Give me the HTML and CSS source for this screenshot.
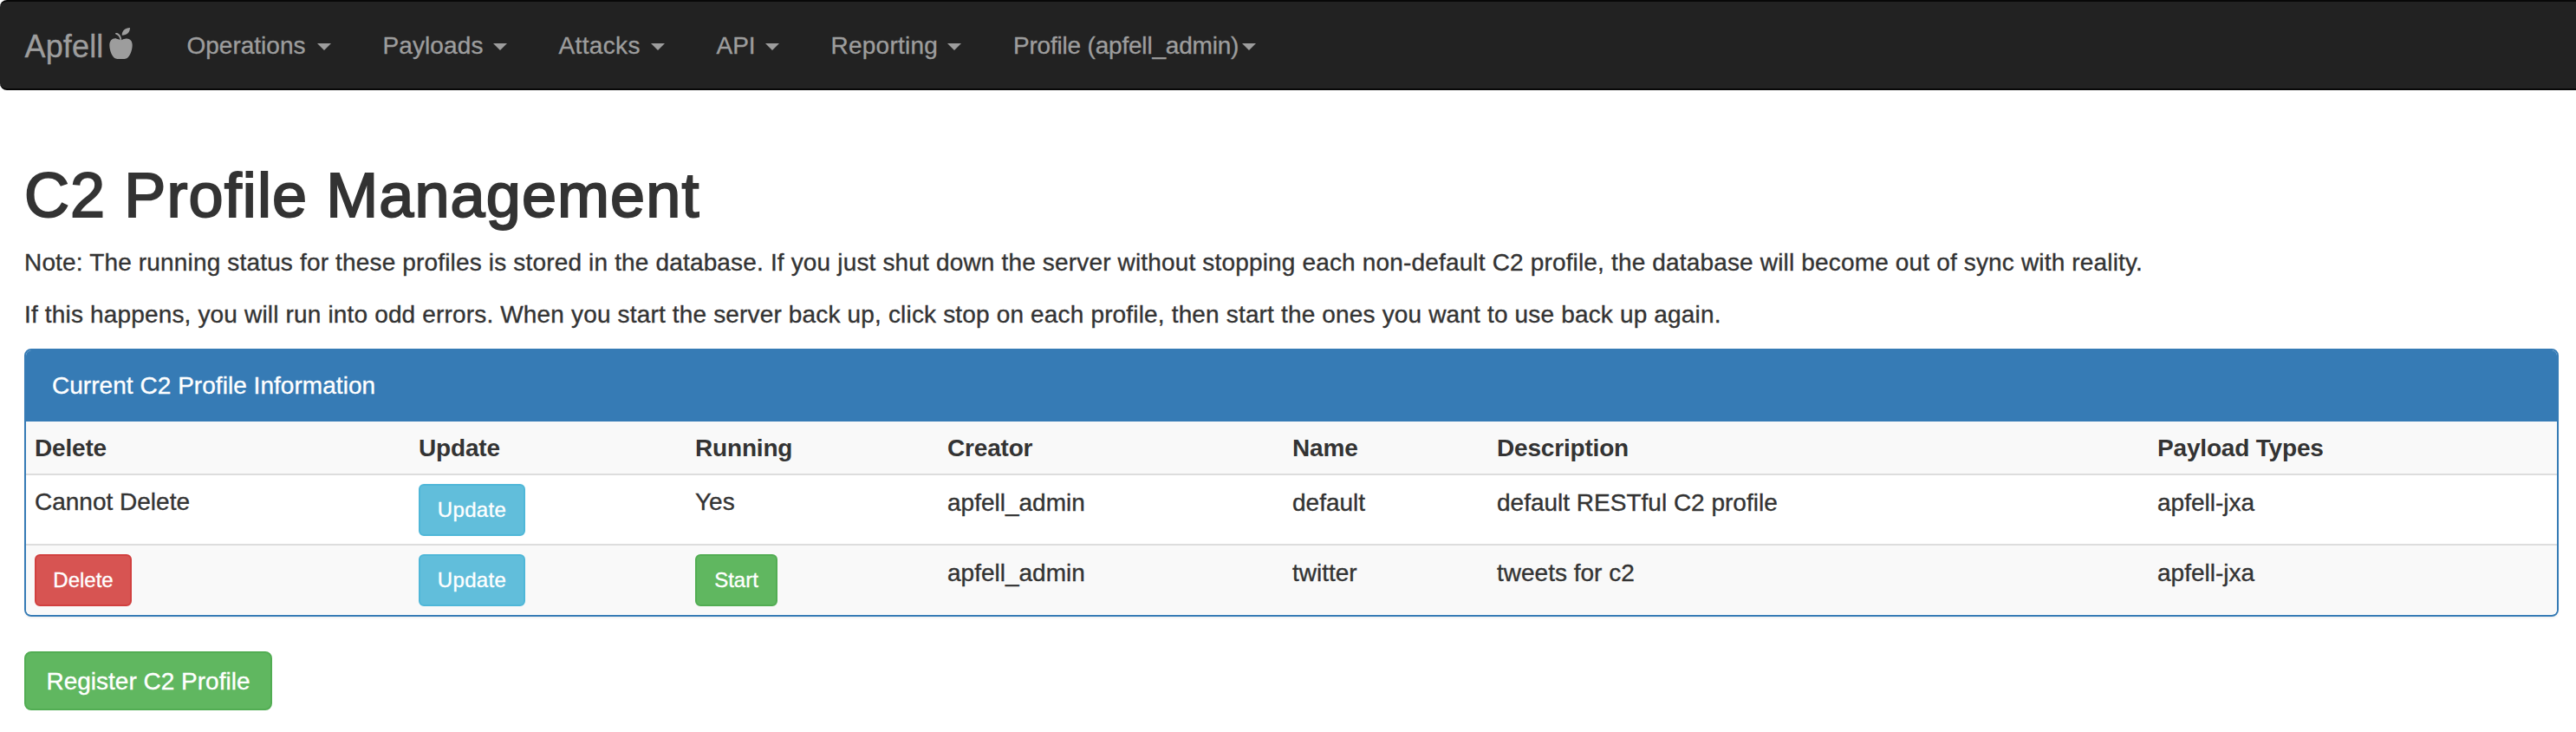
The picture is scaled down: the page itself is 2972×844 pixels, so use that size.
FILE: index.html
```
<!DOCTYPE html>
<html lang="en">
<head>
<meta charset="utf-8">
<title>C2 Profile Management</title>
<link rel="stylesheet" href="styles.css">
</head>
<body>
<nav class="navbar">
  <a class="brand"><span>Apfell</span><svg class="apple" viewBox="0 0 108 120" aria-hidden="true"><path d="M62 32C62 17 72 7 90 6C90 21 80 32 62 32Z"/><path d="M59 50C56 46 52 46 44 44C31 40 19 50 19 66C19 84 27 105 38 112C43 115 49 114 58 114C67 114 74 115 79 112C90 105 98 84 98 66C98 50 88 41 73 44C67 45 64 46 61 49C60 37 54 25 44 24L39 24L41 29C49 31 52 35 56 47Z"/></svg></a>
  <a class="link operations"><span>Operations</span><i class="caret"></i></a>
  <a class="link payloads"><span>Payloads</span><i class="caret"></i></a>
  <a class="link attacks"><span>Attacks</span><i class="caret"></i></a>
  <a class="link api"><span>API</span><i class="caret"></i></a>
  <a class="link reporting"><span>Reporting</span><i class="caret"></i></a>
  <a class="link profile"><span>Profile (apfell_admin)</span><i class="caret"></i></a>
</nav>
<main class="content">
  <h1 class="title">C2 Profile Management</h1>
  <p class="note">Note: The running status for these profiles is stored in the database. If you just shut down the server without stopping each non-default C2 profile, the database will become out of sync with reality.</p>
  <p class="note">If this happens, you will run into odd errors. When you start the server back up, click stop on each profile, then start the ones you want to use back up again.</p>
  <section class="panel">
    <div class="panel-heading">Current C2 Profile Information</div>
    <table class="table">
      <colgroup><col class="col-delete"><col class="col-update"><col class="col-running"><col class="col-creator"><col class="col-name"><col class="col-description"><col></colgroup>
      <thead>
        <tr><th>Delete</th><th>Update</th><th>Running</th><th>Creator</th><th>Name</th><th>Description</th><th>Payload Types</th></tr>
      </thead>
      <tbody>
        <tr><td class="status">Cannot Delete</td><td><button class="btn btn-info">Update</button></td><td class="status">Yes</td><td class="data">apfell_admin</td><td class="data">default</td><td class="data">default RESTful C2 profile</td><td class="data">apfell-jxa</td></tr>
        <tr><td><button class="btn btn-danger">Delete</button></td><td><button class="btn btn-info">Update</button></td><td><button class="btn btn-start">Start</button></td><td class="data">apfell_admin</td><td class="data">twitter</td><td class="data">tweets for c2</td><td class="data">apfell-jxa</td></tr>
      </tbody>
    </table>
  </section>
  <button class="btn btn-register">Register C2 Profile</button>
</main>
</body>
</html>
```
FILE: styles.css
```
* { box-sizing: border-box; }

body {
  margin: 0;
  background: #fff;
  color: #333;
  font: 28px/40px "Liberation Sans", Arial, sans-serif;
  -webkit-text-stroke: 0.35px currentColor;
}

.navbar {
  display: flex;
  height: 104px;
  padding: 31px 0 0 28.5px;
  background: #222;
  border: solid #080808;
  border-width: 2px 0;
  border-radius: 8px 0 0 8px;
  color: #9d9d9d;
}

.brand {
  display: flex;
  width: 157px;
  padding-top: 1px;
  font-size: 36px;
  line-height: 40px;
}

.brand span { width: 91px; letter-spacing: 0.15px; }

.apple {
  width: 36px;
  height: 40px;
  margin-top: -4px;
  fill: #9d9d9d;
  stroke: none;
}

.link {
  display: flex;
  justify-content: space-between;
  margin: 0 30px;
  white-space: nowrap;
}

.caret {
  width: 0;
  height: 0;
  margin-top: 17px;
  border: 8px solid transparent;
  border-top-color: #9d9d9d;
  border-bottom: 0;
}

.operations { width: 166px; }
.payloads { width: 143px; letter-spacing: 0.1px; }
.attacks { width: 122px; letter-spacing: 0.35px; }
.api { width: 72px; }
.reporting { width: 150.5px; letter-spacing: 0.25px; }
.profile { width: 279.5px; letter-spacing: -0.2px; }

.content { padding: 81px 20px 0 28px; }

.title {
  margin: 0 0 18px;
  font-size: 72px;
  font-weight: 400;
  line-height: 80px;
  letter-spacing: 1.1px;
  -webkit-text-stroke: 2px #333;
}

.note { margin: 0 0 20px; letter-spacing: 0.163px; }

.panel {
  height: 309px;
  margin-top: -1px;
  border: 2px solid #367bb5;
  border-radius: 8px;
  box-shadow: 0 2px 2px rgba(0, 0, 0, .05);
  overflow: hidden;
}

.note + .panel { margin-top: -1px; }
.note:nth-of-type(2) { margin-bottom: 19px; }
.note:nth-of-type(2) + .panel { margin-top: 0; }

.panel-heading {
  height: 82px;
  padding: 21px 30px;
  background: #367bb5;
  color: #fff;
  letter-spacing: 0.04px;
}

.table {
  width: 100%;
  table-layout: fixed;
  border-collapse: separate;
  border-spacing: 0;
}

.col-delete { width: 443px; }
.col-update { width: 319px; }
.col-running { width: 291px; }
.col-creator { width: 398px; }
.col-name { width: 236px; }
.col-description { width: 762px; }

th {
  height: 60px;
  padding: 11px 10px 9px;
  background: #f9f9f9;
  text-align: left;
  letter-spacing: -0.18px;
  -webkit-text-stroke: 0;
}

td {
  height: 81px;
  padding: 10px 10px 9px;
  border-top: 2px solid #ddd;
  vertical-align: top;
}

.status { padding-top: 11px; padding-bottom: 8px; }
.data { padding-top: 12px; padding-bottom: 7px; }

tr:nth-child(2) td { background: #f9f9f9; }

.btn {
  display: block;
  height: 60px;
  padding: 0;
  border: 2px solid;
  border-radius: 6px;
  color: #fff;
  font: 24px/56px "Liberation Sans", Arial, sans-serif;
  text-align: center;
}

.btn-info {
  width: 123px;
  background: #61bedb;
  border-color: #4fb7d8;
  letter-spacing: 0.35px;
}

.btn-danger {
  width: 112px;
  background: #d75452;
  border-color: #d1403f;
}

.btn-start {
  width: 95px;
  background: #60b760;
  border-color: #52ad53;
}

.btn-register {
  width: 286px;
  height: 68px;
  margin-top: 40px;
  padding-top: 1px;
  background: #60b760;
  border-color: #52ad53;
  border-radius: 8px;
  font-size: 28px;
  line-height: 63px;
}
```
